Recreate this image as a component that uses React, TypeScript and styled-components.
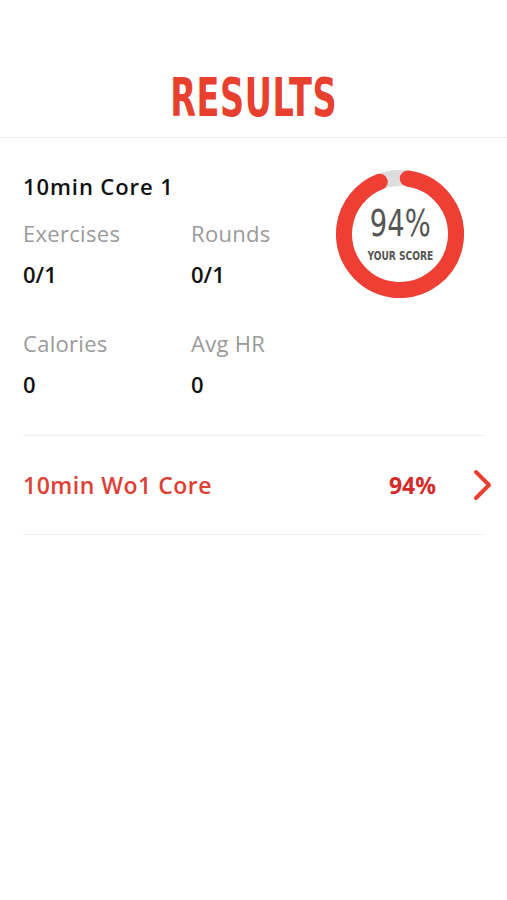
import styled, { createGlobalStyle } from "styled-components";

const GlobalStyle = createGlobalStyle`
  html, body {
    margin: 0;
    padding: 0;
    background: #ffffff;
  }
  body {
    font-family: "Open Sans", "Lato", sans-serif;
  }
`;

const Page = styled.div`
  width: 507px;
  min-height: 900px;
  background: #fff;
  display: flex;
  flex-direction: column;
`;

const Header = styled.header`
  height: 138px;
  border-bottom: 1px solid #eeeeee;
  display: flex;
  justify-content: center;
  box-sizing: border-box;
  padding-top: 68px;
`;

// condensed display face: DejaVu squeezed horizontally
const Title = styled.h1`
  margin: 0;
  font-family: "DejaVu Sans", sans-serif;
  font-weight: 700;
  font-size: 54px;
  line-height: 60px;
  color: #e8402f;
  letter-spacing: 1px;
  transform: scaleX(0.62);
`;

const Summary = styled.section`
  display: flex;
  justify-content: space-between;
  padding: 34px 43px 0 23px;
`;

const Stats = styled.div`
  display: flex;
  flex-direction: column;
`;

const WorkoutName = styled.div`
  font-size: 22px;
  font-weight: 600;
  color: #111;
  line-height: 28px;
  letter-spacing: 0.9px;
`;

const StatGrid = styled.div`
  display: grid;
  grid-template-columns: 168px 120px;
  row-gap: 41px;
  margin-top: 19px;
`;

const Stat = styled.div`
  display: flex;
  flex-direction: column;
  gap: 13px;
`;

const StatLabel = styled.div`
  font-size: 22px;
  color: #9a9a9a;
  line-height: 28px;
  letter-spacing: 0.3px;
`;

const StatValue = styled.div`
  font-size: 22px;
  font-weight: 600;
  color: #111;
  line-height: 28px;
`;

const Ring = styled.div`
  position: relative;
  width: 128px;
  height: 128px;
  margin-top: -2px;
`;

const RingLabel = styled.div`
  position: absolute;
  inset: 0;
  display: flex;
  flex-direction: column;
  align-items: center;
  justify-content: center;
  font-family: "DejaVu Sans", sans-serif;
  color: #555;
`;

const RingPercent = styled.div`
  font-size: 38px;
  line-height: 40px;
  margin-top: -2px;
  transform: scaleX(0.72);
`;

const RingCaption = styled.div`
  font-size: 12px;
  font-weight: 700;
  line-height: 14px;
  margin-top: 6px;
  transform: scaleX(0.76);
`;

const List = styled.div`
  margin: 37px 23px 0 23px;
  border-top: 1px solid #eeeeee;
`;

const ListRow = styled.div`
  display: flex;
  align-items: center;
  height: 98px;
  border-bottom: 1px solid #eeeeee;
`;

const RowName = styled.div`
  flex: 1;
  font-size: 23px;
  font-weight: 600;
  color: #de4034;
  letter-spacing: 0.5px;
`;

const RowScore = styled.div`
  font-size: 23px;
  font-weight: 700;
  color: #d42a2a;
  margin-right: 36px;
`;

const Chevron = styled.svg`
  width: 22px;
  height: 32px;
  margin-right: -10px;
`;

const ScoreRing = ({ pct }: { pct: number }) => {
  const r = 56;
  const c = 2 * Math.PI * r;
  const gap = c * (1 - pct / 100);
  return (
    <svg width="128" height="128" viewBox="0 0 128 128">
      <circle cx="64" cy="64" r={r} fill="none" stroke="#dddddd" strokeWidth="16" />
      <circle
        cx="64"
        cy="64"
        r={r}
        fill="none"
        stroke="#ef3e33"
        strokeWidth="16"
        strokeLinecap="round"
        strokeDasharray={`${c - gap - 8} ${c}`}
        transform="rotate(-82 64 64)"
      />
    </svg>
  );
};

export default function App() {
  return (
    <Page>
      <GlobalStyle />
      <Header>
        <Title>RESULTS</Title>
      </Header>
      <Summary>
        <Stats>
          <WorkoutName>10min Core 1</WorkoutName>
          <StatGrid>
            <Stat>
              <StatLabel>Exercises</StatLabel>
              <StatValue>0/1</StatValue>
            </Stat>
            <Stat>
              <StatLabel>Rounds</StatLabel>
              <StatValue>0/1</StatValue>
            </Stat>
            <Stat>
              <StatLabel>Calories</StatLabel>
              <StatValue>0</StatValue>
            </Stat>
            <Stat>
              <StatLabel>Avg HR</StatLabel>
              <StatValue>0</StatValue>
            </Stat>
          </StatGrid>
        </Stats>
        <Ring>
          <ScoreRing pct={94} />
          <RingLabel>
            <RingPercent>94%</RingPercent>
            <RingCaption>YOUR SCORE</RingCaption>
          </RingLabel>
        </Ring>
      </Summary>
      <List>
        <ListRow>
          <RowName>10min Wo1 Core</RowName>
          <RowScore>94%</RowScore>
          <Chevron viewBox="0 0 22 32">
            <path d="M4 3 L17 16 L4 29" fill="none" stroke="#e8402f" strokeWidth="4" strokeLinecap="round" strokeLinejoin="round" />
          </Chevron>
        </ListRow>
      </List>
    </Page>
  );
}
